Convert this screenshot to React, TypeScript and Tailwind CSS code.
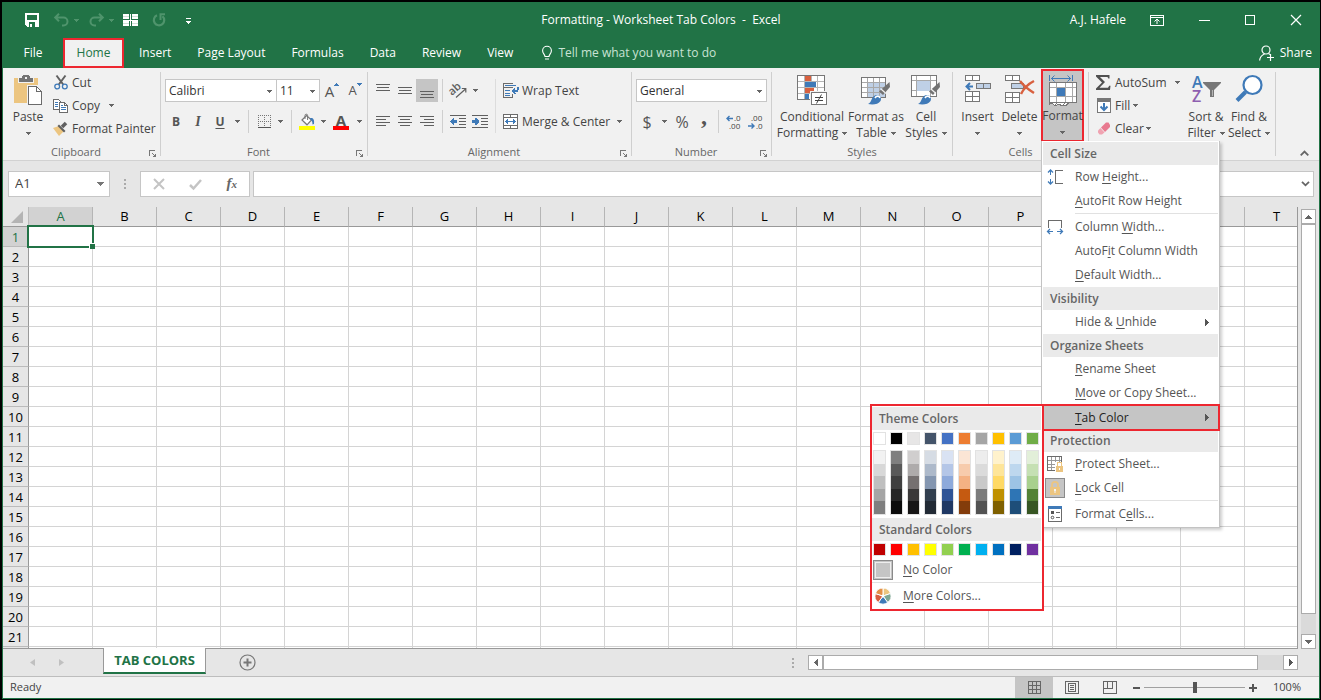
import type { ReactNode } from 'react';

const GREY = '#6b6b6b';
const BLUE = '#3f7ab8';

type SvgProps = { w: number; h: number; smooth?: boolean; className?: string; children: ReactNode };

function Svg({ w, h, smooth, className = '', children }: SvgProps) {
  return (
    <svg
      width={w}
      height={h}
      viewBox={`0 0 ${w} ${h}`}
      fill="none"
      shapeRendering={smooth ? 'auto' : 'crispEdges'}
      className={`shrink-0 overflow-visible ${className}`}
      aria-hidden="true"
    >
      {children}
    </svg>
  );
}

function Caret({ className = '' }: { className?: string }) {
  return (
    <Svg w={5} h={3} className={className}>
      <path d="M0 0h5v1H0zM1 1h3v1H1zM2 2h1v1H2z" fill="currentColor" />
    </Svg>
  );
}

/* ---------- Title bar icons ---------- */

const SaveIcon = () => (
  <Svg w={14} h={14}>
    <path d="M0 0h14v14H2l-2-2z" fill="#fff" />
    <path d="M2 2h10v5H2zM4 9h6v5H4z" fill="#217346" />
    <path d="M5 11h2v3H5z" fill="#fff" />
    <path d="M4 9h6v2H4z" fill="#217346" />
  </Svg>
);

const UndoIcon = () => (
  <Svg w={15} h={14} smooth>
    <path d="M1 4.500h8.500a4 4 0 0 1 0 8H8M5 .8L1.200 4.500 5 8.200" stroke="#4f946c" strokeWidth="2" />
  </Svg>
);

const RedoIcon = () => (
  <Svg w={15} h={14} smooth>
    <path d="M14 4.500H5.500a4 4 0 0 0 0 8H7M10 .8l3.800 3.700L10 8.200" stroke="#4f946c" strokeWidth="2" />
  </Svg>
);

const FreezeIcon = () => (
  <Svg w={15} h={12}>
    <path d="M0 0h6v2H0zM0 3h6v2H0zM9 0h6v2H9zM9 3h6v2H9zM0 7h6v2H0zM9 7h6v2H9zM0 10h6v2H0zM9 10h6v2H9z" fill="#fff" />
    <path d="M0 2h6v1H0zM9 2h6v1H9zM0 9h6v1H0zM9 9h6v1H9z" fill="#cfe2d7" />
    <path d="M7 0h1v12H7zM0 5.500h15v1H0z" fill="#fff" />
  </Svg>
);

const RepeatIcon = () => (
  <Svg w={14} h={14} smooth>
    <path d="M5 2.300A5.200 5.200 0 1 0 10.500 3.200" stroke="#4f946c" strokeWidth="2.200" />
    <path d="M8.500 7V1.200H13" stroke="#4f946c" strokeWidth="2" />
  </Svg>
);

/* ---------- Ribbon icons ---------- */

const PasteIcon = () => (
  <Svg w={28} h={31}>
    <path d="M0 3h24v25H0z" fill="#ecc580" />
    <path d="M4 2h16v6H4z" fill="#f1f1f1" />
    <path d="M5 3h3V1h1V0h6v1h1v2h3v4H5z" fill="#737373" />
    <path d="M11 2h2v2h-2z" fill="#f1f1f1" />
    <path d="M13 10h15v21H13z" fill="#f1f1f1" />
    <path d="M14.500 11.500h8l5 5v13h-13z" fill="#fff" stroke={GREY} />
    <path d="M22.500 11.500v5h5" stroke={GREY} />
  </Svg>
);

const CutIcon = () => (
  <Svg w={14} h={15} smooth>
    <path d="M2.500.5l6.700 9M11.500.5l-6.700 9" stroke="#606060" strokeWidth="2" />
    <circle cx="3.200" cy="11.500" r="2.400" stroke={BLUE} strokeWidth="1.300" />
    <circle cx="10.800" cy="11.500" r="2.400" stroke={BLUE} strokeWidth="1.300" />
  </Svg>
);

const CopyIcon = () => (
  <Svg w={15} h={14}>
    <path d="M.5.5h5l2 2v8h-7z" fill="#fff" stroke={GREY} />
    <path d="M2 3h3v1H2zM2 5h3v1H2zM2 7h3v1H2z" fill={BLUE} />
    <path d="M6.500 3.500h5l3 3v7h-8z" fill="#fff" stroke={GREY} />
    <path d="M11.500 3.500v3h3" stroke={GREY} />
    <path d="M8 8h5v1H8zM8 10h5v1H8zM8 6h2v1H8z" fill={BLUE} />
  </Svg>
);

const PainterIcon = () => (
  <Svg w={15} h={14} smooth>
    <path d="M0 6l6-2 5 5-5 5z" fill="#ecc580" />
    <path d="M6 2.500l6.500 6.500-1.500 1.500L4.500 4z" fill="#606060" />
    <path d="M9 5l4-4" stroke="#606060" strokeWidth="3.500" />
  </Svg>
);

const BordersIcon = () => (
  <Svg w={13} h={13}>
    <path d="M0 .5h13M0 6.500h13M.5 0v12M6.500 0v12M12.500 0v12" stroke="#777" strokeDasharray="1 1" />
    <path d="M0 12.500h13" stroke="#555" />
  </Svg>
);

const FillColorIcon = () => (
  <Svg w={16} h={16} smooth>
    <path d="M0 12h16v4H0z" fill="#ff0" />
    <path d="M3 6l4.500-4.500L12.500 6 8 10.800z" fill="#fff" stroke="#777" strokeWidth="1.200" />
    <path d="M6 5V1.500a1.300 1.300 0 0 1 2.600 0V6" stroke="#777" />
    <path d="M11 4c3-.5 4.600 1 4 6l-1.500.5C13.500 8 13 6.500 11.500 5.800z" fill={BLUE} />
  </Svg>
);

const AlignIcon = ({ rows }: { rows: Array<[number, number, number]> }) => (
  <Svg w={14} h={14}>
    {rows.map(([x, y, w]) => (
      <rect key={y} x={x} y={y} width={w} height="1" fill="#606060" />
    ))}
  </Svg>
);

const OrientationIcon = () => (
  <Svg w={17} h={16} smooth>
    <text x="0" y="10" fontSize="11" fontWeight="600" fill="#606060" transform="rotate(-42 5 9)">ab</text>
    <path d="M6 14.500L15.500 6M15.800 9.500v-4h-4" stroke="#606060" strokeWidth="1.200" />
  </Svg>
);

const IndentIcon = ({ right }: { right?: boolean }) => (
  <Svg w={16} h={14}>
    <path d="M0 .5h16M9 3.500h7M9 6.500h7M9 9.500h7M0 12.500h16" stroke="#606060" />
    {right ? (
      <path d="M0 5h3V3h1l3 3v1l-3 3H3V8H0z" fill={BLUE} />
    ) : (
      <path d="M7 5H4V3H3L0 6v1l3 3h1V8h3z" fill={BLUE} />
    )}
  </Svg>
);

const WrapIcon = () => (
  <Svg w={16} h={15}>
    <path d="M.5 0v15M0 .5h10M0 4.500h10M9.500 11v4M0 14.500h10M9.500 0v1" stroke={GREY} />
    <path d="M2 2h11v1H2zM2 7h5v1H2zM2 10h5v1H2zM2 12h5v1H2z" fill={BLUE} />
    <path d="M15 4v2l-1 2H10M12 5.500L9.500 8l2.500 3" stroke={BLUE} strokeWidth="1.500" />
  </Svg>
);

const MergeIcon = () => (
  <Svg w={15} h={15}>
    <path d="M.5.5h14v14H.5zM0 3.500h15M0 11.500h15M7.500 0v3M7.500 12v3" fill="#fff" stroke={GREY} />
    <path d="M2 7h11v1H2zM3 6h1v3H3zM4 5h1v5H4zM11 6h1v3h-1zM10 5h1v5h-1z" fill={BLUE} />
  </Svg>
);

const DecimalIcon = ({ increase }: { increase?: boolean }) => (
  <Svg w={16} h={14} smooth>
    <text x={increase ? 8 : 3} y="6" fontSize="8" fill="#444">{increase ? '.0' : '.00'}</text>
    <text x={increase ? 3 : 8} y="14" fontSize="8" fill="#444">{increase ? '.00' : '.0'}</text>
    {increase ? (
      <path d="M7 3.500H1M3.500 1L1 3.500 3.500 6" stroke={BLUE} strokeWidth="1.400" />
    ) : (
      <path d="M0 11h6M3.500 8.500L6 11 3.500 13.500" stroke={BLUE} strokeWidth="1.400" />
    )}
  </Svg>
);

const ConditionalIcon = () => (
  <Svg w={30} h={31}>
    <path d="M.5.5h27v24H.5z" fill="#fff" stroke="#777" />
    <path d="M7.500 0v25M14.500 0v25M20.500 0v25M0 6.500h28M0 12.500h28M0 18.500h28" stroke="#b5b5b5" />
    <path d="M.5.5h27v24H.5z" stroke="#777" />
    <path d="M8 1h6v5H8zM8 13h9v5H8z" fill="#d8603f" />
    <path d="M8 7h11v5H8zM8 19h4v5H8z" fill={BLUE} />
    <path d="M13 16h17v15H13z" fill="#f1f1f1" />
    <path d="M14.500 17.500h15v12h-15z" fill="#fff" stroke="#777" />
    <path d="M18 22h8v1h-8zM18 25h8v1h-8z" fill="#444" />
    <path d="M24.500 19.500l-5 9" stroke="#444" shapeRendering="auto" />
  </Svg>
);

const Brush = () => (
  <g shapeRendering="auto">
    <path d="M28.500 7l.5 5-7 8-4-3.500z" fill="#737373" />
    <path d="M20 14l5 4.500" stroke="#f1f1f1" strokeWidth="1.200" />
    <path d="M7 29c4-1 3-8 8-9 4-.6 6 3 4.500 6-2 3.500-8 4-12.500 3z" fill={BLUE} />
    <path d="M14 23c1.500-2.500 4-2.500 5 0" stroke="#fff" strokeWidth="1.600" />
  </g>
);

const FormatTableIcon = () => (
  <Svg w={30} h={30}>
    <path d="M.5 2.500h24v20H.5z" fill="#fff" />
    <path d="M7 7h18v16H7z" fill="#bfd0e6" />
    <path d="M6.500 2v20M12.500 2v20M18.500 2v20M0 7.500h25M0 12.500h25M0 17.500h25" stroke="#a8a8a8" />
    <path d="M.5 2.500h24v20H.5z" stroke="#777" />
    <Brush />
  </Svg>
);

const CellStylesIcon = () => (
  <Svg w={30} h={30}>
    <path d="M.5.5h25v21H.5z" fill="#fff" />
    <path d="M5.500 0v22M19.500 0v22M0 5.500h26M0 15.500h26" stroke="#a8a8a8" />
    <path d="M.5.5h25v21H.5z" stroke="#777" />
    <path d="M6 6h13v10H6z" fill="#bfd0e6" />
    <Brush />
  </Svg>
);

const InsertCellsIcon = () => (
  <Svg w={27} h={28}>
    <path d="M1.500.5h14v5h-14zM8.500 0v6M1.500 16.500h14v10h-14zM8.500 16v11M1 21.500h15" fill="#fff" stroke="#777" />
    <path d="M12.500 8.500h14v5h-14z" fill="#bfd0e6" stroke="#777" />
    <path d="M19.500 8v6" stroke="#777" />
    <path d="M9 11.500H3M6 8l-3.500 3.500L6 15" stroke={BLUE} strokeWidth="2" shapeRendering="auto" />
  </Svg>
);

const DeleteCellsIcon = () => (
  <Svg w={30} h={29}>
    <path d="M.5.5h14v5H.500zM7.500 0v6M.5 17.500h14v10H.500zM7.500 17v11M0 22.500h15" fill="#fff" stroke="#777" />
    <path d="M6.500 8.500h12v5h-12z" fill="#bfd0e6" stroke="#777" />
    <path d="M15 6c4 5 9 9 14 12M29 6c-6 3-10 7-13 13" stroke="#d8603f" strokeWidth="2.500" shapeRendering="auto" />
  </Svg>
);

const FormatCellsBigIcon = () => (
  <Svg w={28} h={32}>
    <path d="M.5 0v6M23.500 0v6" stroke={BLUE} />
    <path d="M2 3.500h20M5.500.5L2.500 3.500l3 3M18.500.5l3 3-3 3" stroke={BLUE} shapeRendering="auto" />
    <path d="M.5 7.500h27v20H20l-3 3h-4l-3-1-4 1-3-2-2.500.5z" fill="#fff" stroke="#777" />
    <path d="M7.500 8v19M16.500 8v19M23.500 8v19M1 12.500h26M1 21.500h26" stroke="#a8a8a8" />
    <path d="M1 27.500h18M8 28l-2 2.500M16 28l-2 2.500" stroke="#777" />
    <path d="M8 13h8v8H8z" fill={BLUE} />
  </Svg>
);

const SigmaIcon = () => (
  <Svg w={15} h={15} smooth>
    <path d="M0 0h13.500v3.500h-1.200L11.500 2H4l5 5-5.500 5.800H12l1.200-2h1.300L14 15H0v-1.500L6 7.500 0 1.500z" fill="#505050" />
  </Svg>
);

const FillDownIcon = () => (
  <Svg w={14} h={15}>
    <path d="M.5.5h13v14H.500z" fill="#fff" stroke="#777" />
    <path d="M0 0h14v4H0z" fill="#777" />
    <path d="M7 5v7M3.500 8.500L7 12l3.500-3.500" stroke={BLUE} strokeWidth="2" shapeRendering="auto" />
  </Svg>
);

const EraserIcon = () => (
  <Svg w={14} h={13} smooth>
    <path d="M9 .5h2.500L13 3v2L8 10 4 5.500z" fill="#e8798f" />
    <path d="M3.500 6l4 4.500L5 12.500H2.500L1 10.500v-2z" fill="#f0a3b1" />
  </Svg>
);

const SortFilterIcon = () => (
  <Svg w={29} h={28} smooth>
    <text x="0" y="13" fontSize="16" fontWeight="600" fill={BLUE}>A</text>
    <text x="0" y="27" fontSize="16" fontWeight="600" fill="#8e5fb0">Z</text>
    <path d="M11 7h18v1l-7 7v7l-4 0v-7l-7-7z" fill="#777" />
    <path d="M20.500 15v6" stroke="#b5b5b5" />
  </Svg>
);

const FindIcon = () => (
  <Svg w={28} h={28} smooth>
    <path d="M10.500 17L2 25.500" stroke={BLUE} strokeWidth="4" />
    <circle cx="17.500" cy="10" r="9" fill="#fff" stroke={BLUE} strokeWidth="2.200" />
  </Svg>
);

/* ---------- Ribbon building blocks ---------- */

function Divider() {
  return <div className="my-1 w-px shrink-0 bg-[#cfcfcf]" />;
}

function RibbonGroup({ label, launcher, width, children }: { label?: string; launcher?: boolean; width: string; children: ReactNode }) {
  return (
    <section className={`flex shrink-0 flex-col ${width}`} aria-label={label}>
      <div className="h-[76px]">{children}</div>
      <div className="flex h-4 items-center">
        <span className="flex-1 text-center text-[11px] text-[#666]">{label}</span>
        {launcher && (
          <button type="button" aria-label={`${label} settings`} className="mr-1 pt-0.5">
            <Svg w={7} h={7}>
              <path d="M0 .5h6M.5 0v6" stroke="#777" />
              <path d="M7 3v4H3zM3 3h1v1H3zM4 4h1v1H4z" fill="#777" />
            </Svg>
          </button>
        )}
      </div>
    </section>
  );
}

function BigButton({ icon, lines, width, active }: { icon: ReactNode; lines: string[]; width: string; active?: boolean }) {
  return (
    <button
      type="button"
      className={`flex h-[73px] shrink-0 flex-col items-center leading-4 whitespace-nowrap ${width} ${
        active ? 'mt-px border-2 border-[#ed2730] bg-[#c5c5c5] pt-1' : 'pt-[7px]'
      }`}
    >
      <span className="flex h-[34px] items-start">{icon}</span>
      <span>{lines[0]}</span>
      <span className="flex h-4 items-center justify-center gap-1">
        {lines[1]}
        <Caret className="text-[#666]" />
      </span>
    </button>
  );
}

function SmallButton({ icon, text, caret }: { icon: ReactNode; text: string; caret?: string }) {
  return (
    <button type="button" className="flex h-[23px] items-center whitespace-nowrap">
      <span className="mr-1 flex w-[15px] justify-center">{icon}</span>
      {text}
      {caret && <Caret className={`text-[#666] ${caret}`} />}
    </button>
  );
}

function IconButton({ label, width = 'w-[22px]', pressed, children }: { label: string; width?: string; pressed?: boolean; children: ReactNode }) {
  return (
    <button
      type="button"
      aria-label={label}
      aria-pressed={pressed}
      className={`flex h-[23px] shrink-0 items-center justify-center text-[#555] ${width} ${pressed ? 'bg-[#c5c5c5]' : ''}`}
    >
      {children}
    </button>
  );
}

function CaretButton({ label }: { label: string }) {
  return (
    <IconButton label={label} width="w-3">
      <Caret className="text-[#666]" />
    </IconButton>
  );
}

function Combo({ label, value, width }: { label: string; value: string; width: string }) {
  return (
    <div className={`relative h-[23px] border border-[#c6c6c6] bg-white text-[#333] ${width}`}>
      <select aria-label={label} className="h-full w-full appearance-none bg-transparent pl-[3px] outline-none">
        <option>{value}</option>
      </select>
      <Caret className="pointer-events-none absolute top-[10px] right-1 text-[#666]" />
    </div>
  );
}

/* ---------- Menus ---------- */

function Mnemonic({ text }: { text: string }) {
  const [before, rest = ''] = text.split('_');
  return (
    <span className="whitespace-pre">
      {before}
      <span className="underline underline-offset-2">{rest.slice(0, 1)}</span>
      {rest.slice(1)}
    </span>
  );
}

function MenuHeading({ children }: { children: string }) {
  return <h3 className="flex h-[23px] items-center bg-[#eaeaea] pl-[7px] font-semibold text-[#666]">{children}</h3>;
}

function MenuItem({ icon, text, arrow }: { icon?: ReactNode; text: string; arrow?: boolean }) {
  return (
    <button type="button" className="flex h-6 w-full items-center pr-[9px] text-left">
      <span className="flex w-6 justify-center">{icon}</span>
      <span className="ml-2 flex-1">
        <Mnemonic text={text} />
      </span>
      {arrow && <MenuArrow />}
    </button>
  );
}

const MenuArrow = () => (
  <Svg w={4} h={7}>
    <path d="M0 0v7h1V6h1V5h1V4h1V3H3V2H2V1H1V0z" fill="#555" />
  </Svg>
);

const RowHeightIcon = () => (
  <Svg w={15} h={16}>
    <path d="M2.500 1v5M2.500 10v5" stroke={BLUE} />
    <path d="M0 3.500L2.500 1 5 3.500M0 12.500L2.500 15 5 12.500" stroke={BLUE} strokeWidth="1.300" shapeRendering="auto" />
    <path d="M15 1.500H7.500v13H15" stroke={GREY} />
  </Svg>
);

const ColumnWidthIcon = () => (
  <Svg w={16} h={15}>
    <path d="M1.500 8V.5h13V8" stroke={GREY} />
    <path d="M1 11.500h5M10 11.500h5" stroke={BLUE} />
    <path d="M3 9L.500 11.500 3 14M13 9l2.500 2.500L13 14" stroke={BLUE} strokeWidth="1.300" shapeRendering="auto" />
  </Svg>
);

const ProtectIcon = () => (
  <Svg w={16} h={16}>
    <path d="M4.500 1v13M8.500 1v13M12.500 1v8M0 4.500h15M0 8.500h9M0 11.500h9" stroke="#9a9a9a" />
    <path d="M14.500 7V.5H.5v14H8" stroke={GREY} />
    <path d="M8 6h8v10H8z" fill="#fff" />
    <path d="M10.500 10V8a2 2 0 0 1 4 0v2" stroke="#ecc580" />
    <path d="M9 10h7v6H9z" fill="#ecc580" />
    <path d="M12 12h1v2h-1z" fill="#fff" />
  </Svg>
);

const LockCellIcon = () => (
  <span className="flex h-5 w-5 items-center justify-center border border-[#8a8a8a] bg-[#c5c5c5]">
    <Svg w={10} h={14} smooth>
      <path d="M2 6V3.500a3 2.700 0 0 1 6 0V6" stroke="#ecc580" strokeWidth="1.800" />
      <path d="M0 6h10v8H0z" fill="#ecc580" />
      <path d="M4 8h2v2H4zM4.500 9h1v3h-1z" fill="#f3f3f3" />
    </Svg>
  </span>
);

const FormatCellsIcon = () => (
  <Svg w={14} h={16}>
    <path d="M.5.5h13v15H.500z" fill="#fff" stroke={GREY} />
    <path d="M0 0h14v3H0z" fill={BLUE} />
    <path d="M8 6.500h4M8 11.500h4" stroke={GREY} />
    <circle cx="4.500" cy="6.500" r="1.500" fill="#555" />
    <circle cx="4.500" cy="11.500" r="1.300" stroke="#555" shapeRendering="auto" />
  </Svg>
);

const PieIcon = () => (
  <Svg w={16} h={16} smooth>
    <g stroke="#fff" strokeWidth="1">
      <path d="M8 8V0a8 8 0 0 1 7.600 5.500z" fill="#ecc580" />
      <path d="M8 8l7.600-2.500a8 8 0 0 1-2.900 9z" fill="#7fa794" />
      <path d="M8 8l4.700 6.500a8 8 0 0 1-9.400 0z" fill={BLUE} />
      <path d="M8 8l-4.700 6.500a8 8 0 0 1-2.900-9z" fill="#d8603f" />
      <path d="M8 8L.4 5.500A8 8 0 0 1 8 0z" fill="#e39048" />
      <circle cx="8" cy="8" r="1.500" fill="#fff" stroke="none" />
    </g>
  </Svg>
);

const themeColors = [
  { base: '#ffffff', shades: ['#f2f2f2', '#d8d8d8', '#bfbfbf', '#a5a5a5', '#7f7f7f'] },
  { base: '#000000', shades: ['#7f7f7f', '#595959', '#3f3f3f', '#262626', '#0c0c0c'] },
  { base: '#e7e6e6', shades: ['#d0cece', '#aeabab', '#757070', '#3a3838', '#171616'] },
  { base: '#44546a', shades: ['#d6dce4', '#adb9ca', '#8496b0', '#323f4f', '#222a35'] },
  { base: '#4472c4', shades: ['#d9e2f3', '#b4c6e7', '#8eaadb', '#2f5496', '#1f3864'] },
  { base: '#ed7d31', shades: ['#fbe5d5', '#f7cbac', '#f4b183', '#c55a11', '#833c0b'] },
  { base: '#a5a5a5', shades: ['#ededed', '#dbdbdb', '#c9c9c9', '#7b7b7b', '#525252'] },
  { base: '#ffc000', shades: ['#fff2cc', '#fee599', '#ffd965', '#bf9000', '#7f6000'] },
  { base: '#5b9bd5', shades: ['#deebf6', '#bdd7ee', '#9cc3e5', '#2e75b5', '#1e4e79'] },
  { base: '#70ad47', shades: ['#e2efd9', '#c5e0b3', '#a8d08d', '#538135', '#375623'] },
];

const standardColors = ['#c00000', '#ff0000', '#ffc000', '#ffff00', '#92d050', '#00b050', '#00b0f0', '#0070c0', '#002060', '#7030a0'];

function Swatch({ color }: { color: string }) {
  return <button type="button" aria-label={color} className="block h-[13px] w-[13px] border border-[#e2e2e2]" style={{ backgroundColor: color }} />;
}

function ColorMenu() {
  return (
    <div className="absolute -top-0.5 right-full z-30 w-[174px] border-2 border-[#ed2730] bg-white pt-px pb-px text-[#555]">
      <div className="mr-px">
        <MenuHeading>Theme Colors</MenuHeading>
      </div>
      <div className="flex gap-1 pt-0.5 pl-px">
        {themeColors.map((c) => (
          <div key={c.base} className="flex flex-col gap-[5px]">
            <Swatch color={c.base} />
            <div className="flex h-[65px] flex-col border border-[#e2e2e2]">
              {c.shades.map((s) => (
                <button key={s} type="button" aria-label={s} className="w-[11px] flex-1" style={{ backgroundColor: s }} />
              ))}
            </div>
          </div>
        ))}
      </div>
      <div className="mt-[3px] mr-px">
        <MenuHeading>Standard Colors</MenuHeading>
      </div>
      <div className="flex gap-1 pt-0.5 pb-0.5 pl-px">
        {standardColors.map((c) => (
          <Swatch key={c} color={c} />
        ))}
      </div>
      <button type="button" className="flex h-6 w-full items-center pl-px">
        <span className="h-5 w-5 border border-[#8a8a8a] bg-[#c5c5c5] p-px">
          <span className="block h-full w-full border border-[#eee]" />
        </span>
        <span className="ml-[10px]">
          <Mnemonic text="_No Color" />
        </span>
      </button>
      <div className="mb-px h-px bg-[#e1e1e1]" />
      <button type="button" className="flex h-6 w-full items-center pl-[3px]">
        <PieIcon />
        <span className="ml-3">
          <Mnemonic text="_More Colors..." />
        </span>
      </button>
    </div>
  );
}

function FormatMenu() {
  return (
    <div className="absolute top-[73px] left-0 z-20 w-[179px] border border-t-0 border-[#c3c3c3] bg-white px-px pt-px pb-px text-[#555] shadow-[2px_2px_3px_rgba(0,0,0,0.2)]">
      <MenuHeading>Cell Size</MenuHeading>
      <MenuItem icon={<RowHeightIcon />} text="Row _Height..." />
      <MenuItem text="_AutoFit Row Height" />
      <div className="mb-px ml-8 h-px bg-[#e1e1e1]" />
      <MenuItem icon={<ColumnWidthIcon />} text="Column _Width..." />
      <MenuItem text="AutoF_it Column Width" />
      <MenuItem text="_Default Width..." />
      <MenuHeading>Visibility</MenuHeading>
      <MenuItem text="Hide & _Unhide" arrow />
      <MenuHeading>Organize Sheets</MenuHeading>
      <MenuItem text="_Rename Sheet" />
      <MenuItem text="_Move or Copy Sheet..." />
      <div className="relative h-6">
        <div className="absolute -top-px -right-0.5 -bottom-0.5 -left-px border-2 border-[#ed2730] bg-[#c5c5c5]">
          <button type="button" className="flex h-[23px] w-full items-center pr-[9px] text-left text-[#222]">
            <span className="ml-[31px] flex-1">
              <Mnemonic text="_Tab Color" />
            </span>
            <MenuArrow />
          </button>
          <ColorMenu />
        </div>
      </div>
      <MenuHeading>Protection</MenuHeading>
      <MenuItem icon={<ProtectIcon />} text="_Protect Sheet..." />
      <MenuItem icon={<LockCellIcon />} text="_Lock Cell" />
      <div className="mb-px ml-8 h-px bg-[#e1e1e1]" />
      <MenuItem icon={<FormatCellsIcon />} text="Format C_ells..." />
    </div>
  );
}

/* ---------- Page sections ---------- */

function TitleBar() {
  return (
    <header className="grid h-9 grid-cols-[1fr_auto_1fr] items-center text-white">
      <div className="flex items-center pl-[22px]">
        <button type="button" aria-label="Save"><SaveIcon /></button>
        <button type="button" aria-label="Undo" className="ml-[15px]"><UndoIcon /></button>
        <Caret className="ml-[5px] text-[#4f946c]" />
        <button type="button" aria-label="Redo" className="ml-[10px]"><RedoIcon /></button>
        <Caret className="ml-[5px] text-[#4f946c]" />
        <button type="button" aria-label="Freeze panes" className="ml-[9px]"><FreezeIcon /></button>
        <button type="button" aria-label="Repeat" className="ml-[14px]"><RepeatIcon /></button>
        <button type="button" aria-label="Customize toolbar" className="ml-5 flex flex-col gap-0.5 pt-0.5">
          <span className="h-px w-[5px] bg-white" />
          <Caret />
        </button>
      </div>
      <h1 className="whitespace-pre">{'Formatting - Worksheet Tab Colors  -  Excel'}</h1>
      <div className="flex items-center justify-end pr-[13px]">
        <span className="mr-6">A.J. Hafele</span>
        <button type="button" aria-label="Ribbon display options" className="mr-[35px]">
          <Svg w={14} h={11}>
            <path d="M.5.500h13v10H.500zM0 2.500h14" stroke="#fff" />
            <path d="M7 4v5M4.500 6.500L7 4l2.500 2.500" stroke="#fff" shapeRendering="auto" />
          </Svg>
        </button>
        <button type="button" aria-label="Minimize" className="mr-[35px] h-px w-[11px] bg-white" />
        <button type="button" aria-label="Maximize" className="mr-[35px] h-[10px] w-[10px] border border-white" />
        <button type="button" aria-label="Close" className="mr-1">
          <Svg w={12} h={12} smooth>
            <path d="M1 1l10 10M11 1L1 11" stroke="#fff" strokeWidth="1.200" />
          </Svg>
        </button>
      </div>
    </header>
  );
}

const tabs = ['Insert', 'Page Layout', 'Formulas', 'Data', 'Review', 'View'];

function TabStrip() {
  return (
    <nav className="flex h-[30px] items-center text-white">
      <button type="button" className="w-[60px]">File</button>
      <button type="button" className="mr-0.5 h-full w-[61px] border-2 border-[#ed2730] bg-[#f1f1f1] text-[#217346]">Home</button>
      {tabs.map((tab) => (
        <button key={tab} type="button" className="px-[13px]">{tab}</button>
      ))}
      <button type="button" className="ml-4 flex items-center gap-1.5 text-[#c9e3d4]">
        <Svg w={10} h={14} smooth>
          <path d="M3 10.500c0-2-2.400-3-2.400-5.800a4.400 4.400 0 0 1 8.800 0C9.400 7.500 7 8.500 7 10.500zM3 13h4" stroke="#fff" strokeWidth="1.100" />
        </Svg>
        Tell me what you want to do
      </button>
      <button type="button" className="mr-[7px] ml-auto flex items-center gap-1.5">
        <Svg w={15} h={16} smooth>
          <circle cx="7" cy="5" r="4" stroke="#fff" strokeWidth="1.200" />
          <path d="M.6 15.500C1 11.500 3 10 5.500 9M9.500 8.500l1.500 1M8 12.500h7M11.500 9v7" stroke="#fff" strokeWidth="1.200" />
        </Svg>
        Share
      </button>
    </nav>
  );
}

function Ribbon() {
  return (
    <div className="relative z-20 flex h-[93px] border-b border-[#d2d2d2] bg-[#f1f1f1] text-[#444]">
      <RibbonGroup label="Clipboard" launcher width="w-[157px]">
        <div className="flex">
          <BigButton icon={<PasteIcon />} lines={['Paste', '']} width="w-[50px]" />
          <div className="pt-[3px]">
            <SmallButton icon={<CutIcon />} text="Cut" />
            <SmallButton icon={<CopyIcon />} text="Copy" caret="ml-[9px]" />
            <SmallButton icon={<PainterIcon />} text="Format Painter" />
          </div>
        </div>
      </RibbonGroup>
      <Divider />
      <RibbonGroup label="Font" launcher width="w-[206px]">
        <div className="flex flex-col gap-2 pt-[11px] pl-1">
          <div className="flex">
            <Combo label="Font name" value="Calibri" width="w-28" />
            <Combo label="Font size" value="11" width="-ml-px w-11" />
            <IconButton label="Increase font size" width="w-6">
              <span className="text-[15px]">A</span>
              <Svg w={5} h={3} className="mb-3"><path d="M2 0h1v1H2zM1 1h3v1H1zM0 2h5v1H0z" fill={BLUE} /></Svg>
            </IconButton>
            <IconButton label="Decrease font size">
              <span className="text-[13px]">A</span>
              <Caret className="mb-3 text-[#3f7ab8]" />
            </IconButton>
          </div>
          <div className="flex">
            <IconButton label="Bold"><b>B</b></IconButton>
            <IconButton label="Italic"><i className="font-['Liberation_Serif',serif] text-sm font-bold">I</i></IconButton>
            <IconButton label="Underline"><span className="font-bold underline underline-offset-2">U</span></IconButton>
            <CaretButton label="Underline style" />
            <div className="mx-[5px] w-px bg-[#cfcfcf]" />
            <IconButton label="Borders" width="w-5"><BordersIcon /></IconButton>
            <CaretButton label="Border style" />
            <div className="mx-[5px] w-px bg-[#cfcfcf]" />
            <IconButton label="Fill color" width="w-5"><FillColorIcon /></IconButton>
            <CaretButton label="Fill palette" />
            <IconButton label="Font color" width="w-6">
              <span className="h-4 w-4 border-b-4 border-[#f00] text-center text-[15px] leading-3 font-bold">A</span>
            </IconButton>
            <CaretButton label="Font palette" />
          </div>
        </div>
      </RibbonGroup>
      <Divider />
      <RibbonGroup label="Alignment" launcher width="w-[263px]">
        <div className="flex pt-[11px] pl-1">
          <div className="flex flex-col gap-2">
            <div className="flex">
              <IconButton label="Top align"><AlignIcon rows={[[0, 0, 14], [1, 3, 12], [0, 6, 14]]} /></IconButton>
              <IconButton label="Middle align"><AlignIcon rows={[[0, 3, 14], [1, 6, 12], [0, 9, 14]]} /></IconButton>
              <IconButton label="Bottom align" pressed><AlignIcon rows={[[0, 7, 14], [1, 10, 12], [0, 13, 14]]} /></IconButton>
              <div className="mx-1 w-px bg-[#cfcfcf]" />
              <IconButton label="Orientation"><OrientationIcon /></IconButton>
              <CaretButton label="Orientation options" />
            </div>
            <div className="flex">
              <IconButton label="Align left"><AlignIcon rows={[[0, 1, 14], [0, 4, 10], [0, 7, 14], [0, 10, 10]]} /></IconButton>
              <IconButton label="Center"><AlignIcon rows={[[0, 1, 14], [2, 4, 10], [0, 7, 14], [2, 10, 10]]} /></IconButton>
              <IconButton label="Align right"><AlignIcon rows={[[0, 1, 14], [4, 4, 10], [0, 7, 14], [4, 10, 10]]} /></IconButton>
              <div className="mx-1 w-px bg-[#cfcfcf]" />
              <IconButton label="Decrease indent"><IndentIcon /></IconButton>
              <IconButton label="Increase indent"><IndentIcon right /></IconButton>
            </div>
          </div>
          <div className="mr-[7px] ml-1 w-px bg-[#dcdcdc]" />
          <div className="flex flex-col gap-2">
            <SmallButton icon={<WrapIcon />} text="Wrap Text" />
            <SmallButton icon={<MergeIcon />} text="Merge & Center" caret="ml-[7px]" />
          </div>
        </div>
      </RibbonGroup>
      <Divider />
      <RibbonGroup label="Number" launcher width="w-[139px]">
        <div className="flex flex-col gap-2 pt-[11px] pl-1">
          <Combo label="Number format" value="General" width="w-[131px]" />
          <div className="flex">
            <IconButton label="Currency"><span className="text-base">$</span></IconButton>
            <CaretButton label="Currency options" />
            <IconButton label="Percent" width="w-6"><span className="text-base">%</span></IconButton>
            <IconButton label="Thousands separator" width="w-5"><span className="h-7 font-['Liberation_Serif',serif] text-2xl leading-4 font-bold">,</span></IconButton>
            <div className="mx-1 w-px bg-[#cfcfcf]" />
            <IconButton label="Increase decimal"><DecimalIcon increase /></IconButton>
            <IconButton label="Decrease decimal"><DecimalIcon /></IconButton>
          </div>
        </div>
      </RibbonGroup>
      <Divider />
      <RibbonGroup label="Styles" width="w-[180px]">
        <div className="flex pl-1">
          <BigButton icon={<ConditionalIcon />} lines={['Conditional', 'Formatting']} width="w-[72px]" />
          <BigButton icon={<FormatTableIcon />} lines={['Format as', 'Table']} width="w-14" />
          <BigButton icon={<CellStylesIcon />} lines={['Cell', 'Styles']} width="w-11" />
        </div>
      </RibbonGroup>
      <Divider />
      <RibbonGroup label="Cells" width="w-[135px]">
        <div className="relative flex pl-1">
          <BigButton icon={<InsertCellsIcon />} lines={['Insert', '']} width="w-[41px]" />
          <BigButton icon={<DeleteCellsIcon />} lines={['Delete', '']} width="w-[43px]" />
          <div className="relative">
            <BigButton icon={<FormatCellsBigIcon />} lines={['Format', '']} width="w-[43px]" active />
            <FormatMenu />
          </div>
        </div>
      </RibbonGroup>
      <Divider />
      <RibbonGroup width="w-[186px]">
        <div className="flex pl-[7px]">
          <div className="w-[89px] pt-[3px]">
            <SmallButton icon={<SigmaIcon />} text="AutoSum" caret="ml-2" />
            <SmallButton icon={<FillDownIcon />} text="Fill" caret="ml-[3px]" />
            <SmallButton icon={<EraserIcon />} text="Clear" caret="ml-0.5" />
          </div>
          <BigButton icon={<SortFilterIcon />} lines={['Sort &', 'Filter']} width="w-[42px]" />
          <BigButton icon={<FindIcon />} lines={['Find &', 'Select']} width="w-11" />
        </div>
      </RibbonGroup>
      <Divider />
      <button type="button" aria-label="Collapse ribbon" className="mt-auto mr-[10px] mb-1 ml-auto">
        <Svg w={9} h={6} smooth><path d="M.700 5.300L4.500 1.500l3.800 3.800" stroke="#666" strokeWidth="1.800" /></Svg>
      </button>
    </div>
  );
}

function Dots() {
  return (
    <span className="flex flex-col gap-0.5">
      <span className="h-0.5 w-0.5 bg-[#aaa]" />
      <span className="h-0.5 w-0.5 bg-[#aaa]" />
      <span className="h-0.5 w-0.5 bg-[#aaa]" />
    </span>
  );
}

function FormulaBar() {
  return (
    <div className="flex h-[46px] items-center bg-[#e6e6e6] pr-[5px] pl-[5px]">
      <div className="flex h-[26px] w-[102px] items-center justify-between border border-[#c6c6c6] bg-white pr-[5px]">
        <input aria-label="Name box" defaultValue="A1" className="w-20 pl-1.5 text-[13px] text-[#444] outline-none" />
        <button type="button" aria-label="Names">
          <Svg w={7} h={4}><path d="M0 0h7v1H0zM1 1h5v1H1zM2 2h3v1H2zM3 3h1v1H3z" fill="#777" /></Svg>
        </button>
      </div>
      <span className="flex w-[30px] justify-center"><Dots /></span>
      <div className="flex h-[26px] w-[110px] items-center justify-around border border-[#c6c6c6] bg-white">
        <button type="button" aria-label="Cancel">
          <Svg w={12} h={12} smooth><path d="M1 1l10 10M11 1L1 11" stroke="#c4c4c4" strokeWidth="2" /></Svg>
        </button>
        <button type="button" aria-label="Enter">
          <Svg w={13} h={11} smooth><path d="M1 6l3.500 3.500L12 1" stroke="#c4c4c4" strokeWidth="2.500" /></Svg>
        </button>
        <button type="button" aria-label="Insert function" className="pb-0.5 font-['Liberation_Serif',serif] text-[15px] leading-4 font-bold text-[#666] italic">
          f<span className="text-[11px]">x</span>
        </button>
      </div>
      <div className="ml-[3px] flex h-[26px] flex-1 items-center border border-[#c6c6c6] bg-white pr-[3px]">
        <input aria-label="Formula" className="h-full flex-1 px-2 outline-none" />
        <button type="button" aria-label="Expand formula bar">
          <Svg w={9} h={6} smooth><path d="M1 .8l3.500 3.500L8 .8" stroke="#666" strokeWidth="1.800" /></Svg>
        </button>
      </div>
    </div>
  );
}

const columns = 'ABCDEFGHIJKLMNOPQRST'.split('');
const rowNumbers = Array.from({ length: 22 }, (_, i) => i + 1);

function Sheet() {
  return (
    <div className="min-w-0 flex-1 overflow-hidden border-r border-b border-[#999] bg-white">
      <table className="w-max table-fixed border-separate border-spacing-0 text-[13px]">
        <thead>
          <tr className="h-5 bg-[#e6e6e6]">
            <th className="w-[26px] min-w-[26px] border-r border-b border-r-[#bbb] border-b-[#999] p-0">
              <button type="button" aria-label="Select all" className="mt-px ml-2 block">
                <Svg w={12} h={12} smooth><path d="M12 0v12H0z" fill="#b4b4b4" /></Svg>
              </button>
            </th>
            {columns.map((c) => (
              <th
                key={c}
                scope="col"
                className={`w-16 min-w-16 border-r border-b border-r-[#b5b5b5] border-b-[#999] p-0 pb-0.5 font-normal leading-4 ${
                  c === 'A' ? 'bg-[#d2d2d2] text-[#217346]' : 'text-black'
                }`}
              >
                {c}
              </th>
            ))}
          </tr>
        </thead>
        <tbody>
          {rowNumbers.map((r) => (
            <tr key={r} className="h-5">
              <th
                scope="row"
                className={`border-r border-b border-r-[#999] border-b-[#bbb] p-0 font-normal leading-4 ${
                  r === 1 ? 'bg-[#d2d2d2] text-[#217346]' : 'bg-[#e6e6e6] text-black'
                }`}
              >
                {r}
              </th>
              {columns.map((c) => (
                <td key={c} className="relative border-r border-b border-[#d4d4d4] p-0">
                  {r === 1 && c === 'A' && (
                    <span className="absolute -top-0.5 -left-0.5 z-10 block h-[23px] w-[67px] border-2 border-[#217346]">
                      <span className="absolute -right-[3px] -bottom-[3px] h-1.5 w-1.5 border-t border-l border-white bg-[#217346]" />
                    </span>
                  )}
                </td>
              ))}
            </tr>
          ))}
        </tbody>
      </table>
    </div>
  );
}

function VerticalScroll() {
  return (
    <div className="mt-0.5 mr-[3px] ml-[3px] flex w-[15px] flex-col bg-[#dadada]">
      <button type="button" aria-label="Scroll up" className="flex h-[15px] items-center justify-center border border-[#ababab] bg-white">
        <Svg w={7} h={4}><path d="M3 0h1v1H3zM2 1h3v1H2zM1 2h5v1H1zM0 3h7v1H0z" fill="#666" /></Svg>
      </button>
      <div className="mb-5 flex-1 border border-[#ababab] bg-white" />
      <button type="button" aria-label="Scroll down" className="flex h-[15px] items-center justify-center border border-[#ababab] bg-white">
        <Svg w={7} h={4}><path d="M0 0h7v1H0zM1 1h5v1H1zM2 2h3v1H2zM3 3h1v1H3z" fill="#666" /></Svg>
      </button>
    </div>
  );
}

function SheetTabs() {
  return (
    <div className="flex h-[27px] bg-[#e6e6e6]">
      <div className="flex w-[100px] items-center gap-6 pl-[27px]">
        <button type="button" aria-label="Previous sheet">
          <Svg w={5} h={7} smooth><path d="M5 0v7L0 3.500z" fill="#c0c0c0" /></Svg>
        </button>
        <button type="button" aria-label="Next sheet">
          <Svg w={5} h={7} smooth><path d="M0 0v7l5-3.500z" fill="#c0c0c0" /></Svg>
        </button>
      </div>
      <button
        type="button"
        className="relative z-10 -mt-px h-[26px] w-[103px] border-x border-b-2 border-x-[#999] border-b-[#217346] bg-white pt-0.5 text-[13px] font-bold whitespace-nowrap text-[#217346]"
      >
        TAB COLORS
      </button>
      <button type="button" aria-label="New sheet" className="ml-[33px]">
        <Svg w={17} h={17} smooth>
          <circle cx="8.500" cy="8.500" r="7.500" stroke="#777" strokeWidth="1.200" />
          <path d="M8.500 4.500v8M4.500 8.500h8" stroke="#777" strokeWidth="2" />
        </Svg>
      </button>
      <div className="mr-[21px] ml-auto flex w-[506px] items-center">
        <Dots />
        <button type="button" aria-label="Scroll left" className="ml-[14px] flex h-[15px] w-[15px] items-center justify-center border border-[#ababab] bg-white">
          <Svg w={4} h={7}><path d="M4 0v7H3V6H2V5H1V4H0V3h1V2h1V1h1V0z" fill="#666" /></Svg>
        </button>
        <div className="flex h-[15px] flex-1 bg-[#dadada]">
          <div className="mr-[25px] flex-1 border border-[#ababab] bg-white" />
        </div>
        <button type="button" aria-label="Scroll right" className="flex h-[15px] w-[15px] items-center justify-center border border-[#ababab] bg-white">
          <MenuArrow />
        </button>
      </div>
    </div>
  );
}

function StatusBar() {
  return (
    <footer className="flex h-[22px] items-center border-t border-[#bdbdbd] bg-[#f1f1f1] text-[11px] text-[#444]">
      <span className="pl-[7px]">Ready</span>
      <button type="button" aria-label="Normal view" className="ml-auto flex h-full w-[38px] items-center justify-center bg-[#c5c5c5]">
        <Svg w={13} h={13}><path d="M.5.500h12v12H.500zM4.500 0v13M8.500 0v13M0 4.500h13M0 8.500h13" stroke="#666" /></Svg>
      </button>
      <button type="button" aria-label="Page layout view" className="flex w-[38px] justify-center">
        <Svg w={14} h={13}><path d="M.5.500h13v12H.500zM3.500 2.500h7v8h-7zM5 4.500h4M5 6.500h4M5 8.500h4" stroke="#666" /></Svg>
      </button>
      <button type="button" aria-label="Page break view" className="flex w-[38px] justify-center">
        <Svg w={14} h={13}><path d="M.5.500h13v12H.500zM4.500 0v7.500M9.500 0v7.500M0 7.500h10" stroke="#666" /></Svg>
      </button>
      <button type="button" aria-label="Zoom out" className="ml-1 h-0.5 w-[7px] bg-[#555]" />
      <input
        type="range"
        aria-label="Zoom"
        defaultValue={50}
        className="mx-1 h-3 w-[101px] appearance-none bg-transparent bg-[linear-gradient(#a0a0a0,#a0a0a0)] bg-[length:100%_1px] bg-center bg-no-repeat [&::-webkit-slider-thumb]:h-[11px] [&::-webkit-slider-thumb]:w-1 [&::-webkit-slider-thumb]:appearance-none [&::-webkit-slider-thumb]:bg-[#555]"
      />
      <button type="button" aria-label="Zoom in">
        <Svg w={8} h={8}><path d="M3 0h2v8H3zM0 3h8v2H0z" fill="#555" /></Svg>
      </button>
      <span className="w-[62px] pr-[18px] text-right">100%</span>
    </footer>
  );
}

export default function App() {
  return (
    <div className="flex h-screen bg-black pt-0.5 pr-px pb-px pl-0.5 font-['Open_Sans','Noto_Sans',sans-serif] text-xs">
      <div className="flex min-w-0 flex-1 flex-col border border-t-0 border-[#217346] bg-[#217346]">
        <TitleBar />
        <TabStrip />
        <Ribbon />
        <FormulaBar />
        <main className="flex min-h-0 flex-1 bg-[#e6e6e6]">
          <Sheet />
          <VerticalScroll />
        </main>
        <SheetTabs />
        <StatusBar />
      </div>
    </div>
  );
}
